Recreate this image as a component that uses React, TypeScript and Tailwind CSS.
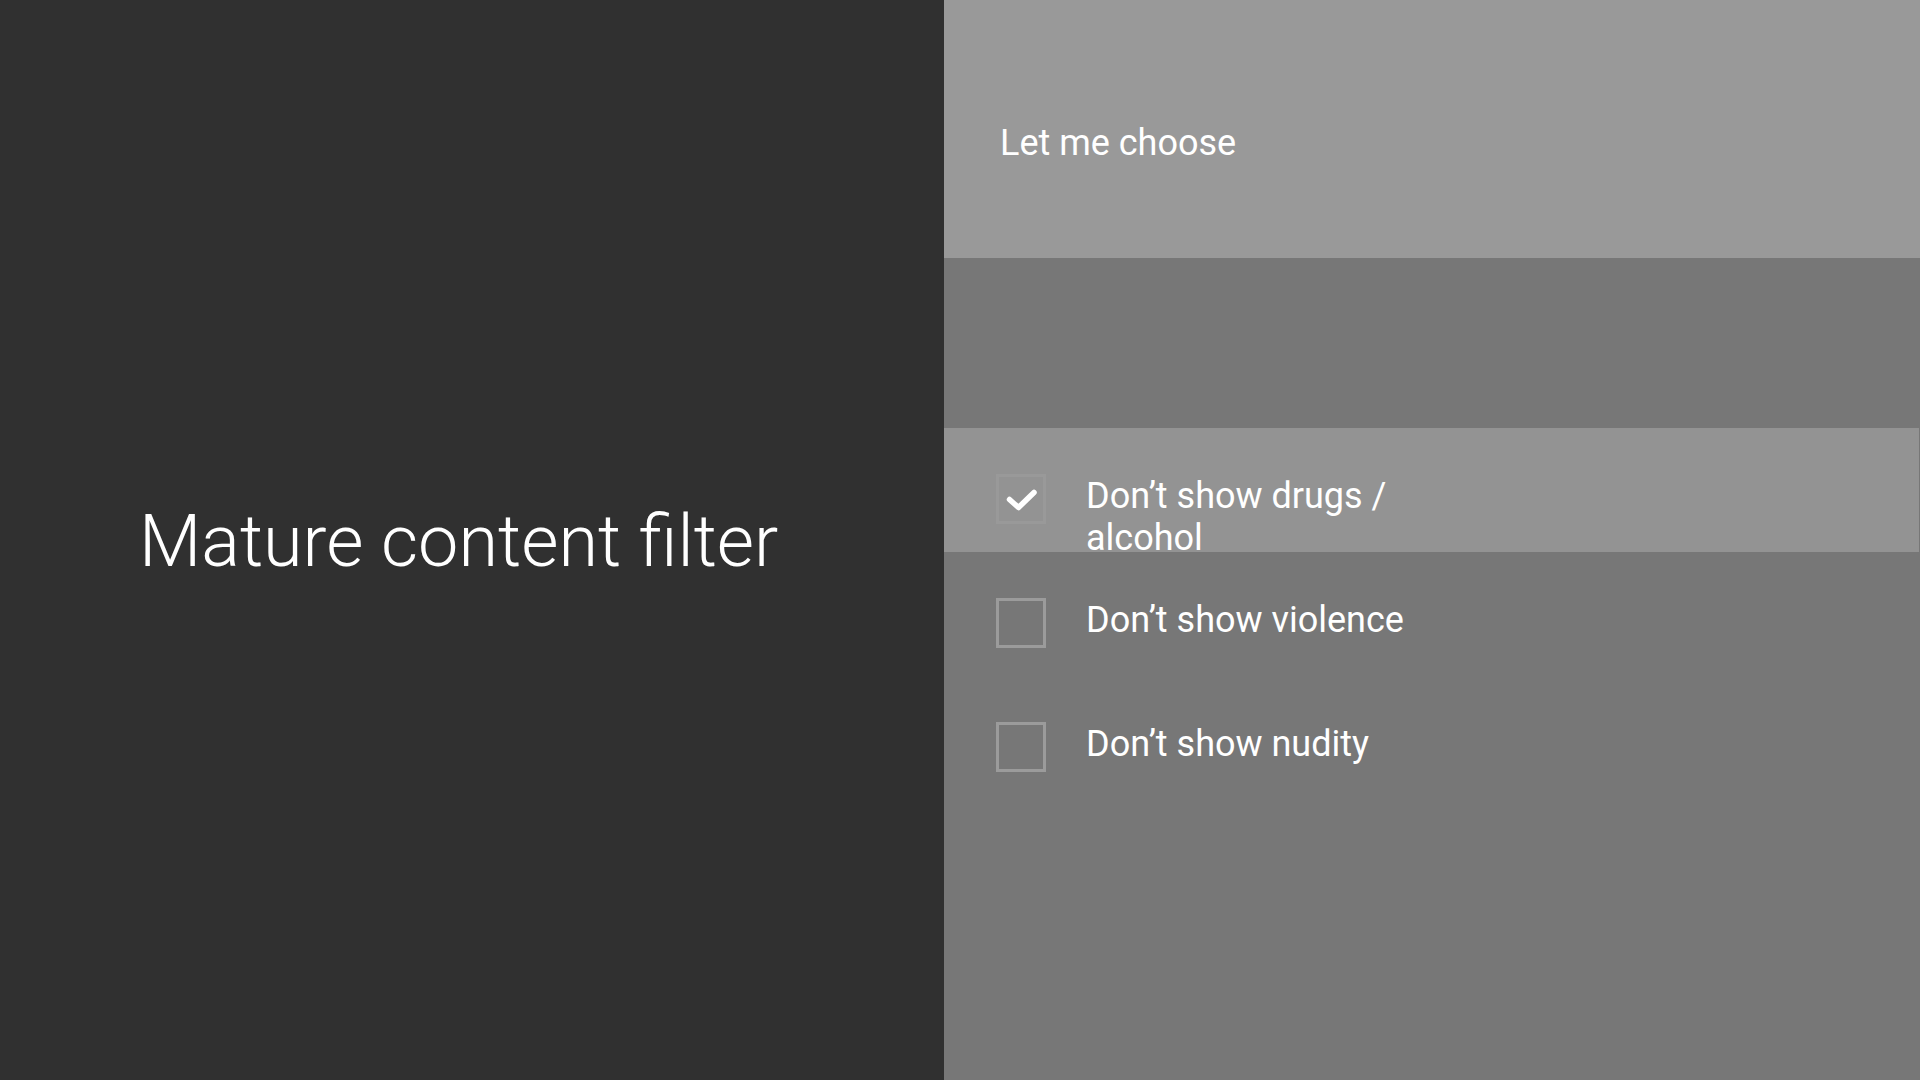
import React from "react";

type Option = { label: string; checked: boolean };

const options: Option[] = [
  { label: "Don’t show drugs / alcohol", checked: true },
  { label: "Don’t show violence", checked: false },
  { label: "Don’t show nudity", checked: false },
];

function CheckBox({ checked }: { checked: boolean }) {
  return (
    <div
      className={
        "w-[50px] h-[50px] shrink-0 border-[3px] flex items-center justify-center " +
        (checked ? "border-[#999999]" : "border-[#9b9b9b]")
      }
    >
      {checked && (
        <svg width="50" height="50" viewBox="0 0 50 50" className="shrink-0">
          <path
            d="M13.5 25.5 L22.5 33.5 L38 18.5"
            fill="none"
            stroke="#ffffff"
            strokeWidth="5.5"
            strokeLinecap="round"
            strokeLinejoin="round"
          />
        </svg>
      )}
    </div>
  );
}

export default function App() {
  return (
    <div
      className="w-[1920px] h-[1080px] flex overflow-hidden text-white"
      style={{ fontFamily: "Roboto, 'Noto Sans', sans-serif" }}
    >
      {/* Title column */}
      <div className="w-[944px] shrink-0 bg-[#303030] flex items-center pl-[139px]">
        <h1 className="text-[72px] leading-none font-light whitespace-nowrap mt-[4px]">
          Mature content filter
        </h1>
      </div>

      {/* Actions column */}
      <div className="flex-1 bg-[#777777] flex flex-col">
        <div className="h-[258px] bg-[#999999] pl-[56px] pt-[123px]">
          <div className="text-[36px] leading-[40px]">Let me choose</div>
        </div>

        <div className="mt-[170px] flex flex-col">
          {options.map((o, i) => (
            <div
              key={o.label}
              className={
                "h-[124px] flex items-start pl-[52px] pt-[46px] mr-[1px] " +
                (i === 0 ? "bg-[#939393]" : "")
              }
            >
              <CheckBox checked={o.checked} />
              <div className="ml-[40px] max-w-[340px] text-[36px] leading-[42px] mt-[1px]">
                {o.label}
              </div>
            </div>
          ))}
        </div>
      </div>
    </div>
  );
}
